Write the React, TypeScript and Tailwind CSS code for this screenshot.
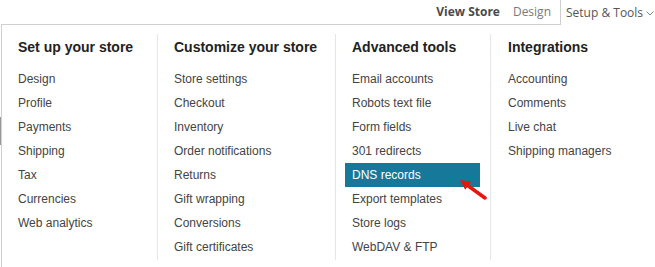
import React from "react";

const cols: { title: string; items: string[] }[] = [
  {
    title: "Set up your store",
    items: ["Design", "Profile", "Payments", "Shipping", "Tax", "Currencies", "Web analytics"],
  },
  {
    title: "Customize your store",
    items: [
      "Store settings",
      "Checkout",
      "Inventory",
      "Order notifications",
      "Returns",
      "Gift wrapping",
      "Conversions",
      "Gift certificates",
    ],
  },
  {
    title: "Advanced tools",
    items: [
      "Email accounts",
      "Robots text file",
      "Form fields",
      "301 redirects",
      "DNS records",
      "Export templates",
      "Store logs",
      "WebDAV & FTP",
    ],
  },
  {
    title: "Integrations",
    items: ["Accounting", "Comments", "Live chat", "Shipping managers"],
  },
];

const colClass = [
  "w-[155px] flex-none pl-[9px] pr-[10px]",
  "w-[178px] flex-none border-l border-[#e6e6e6] pl-[9px] pr-[10px]",
  "w-[155px] flex-none border-l border-[#e6e6e6] pl-[9px] pr-[10px]",
  "flex-1 border-l border-[#e6e6e6] pl-[10px] pr-[10px]",
];

function Arrow() {
  return (
    <svg
      className="absolute left-[110px] top-[14px]"
      width="32"
      height="24"
      viewBox="0 0 32 24"
    >
      <line x1="12" y1="8" x2="30" y2="21" stroke="#e8150d" strokeWidth="3.5" strokeLinecap="round" />
      <polygon points="5,3 10.2,12.85 16,4.75" fill="#e8150d" />
    </svg>
  );
}

export default function App() {
  return (
    <div className="flex w-[655px] h-[267px] overflow-hidden bg-white">
      <div className="w-px flex-none flex flex-col">
        <div className="h-[117px]" />
        <div className="h-[28px] bg-[#9a9a9a]" />
      </div>
      <div className="flex-1 flex flex-col">
        <div
          className="h-[25px] flex flex-none text-[12px] leading-[16px]"
          style={{ fontFamily: '"Open Sans", "Liberation Sans", sans-serif' }}
        >
          <div className="flex-1 border-b border-[#cfcfcf] flex items-center justify-end pr-[9px]">
            <span className="font-bold text-[#4a4a4a]">View Store</span>
            <span className="ml-[13px] text-[#7a7a7a]">Design</span>
          </div>
          <div className="w-[95px] flex-none border-l border-[#cfcfcf] flex items-center pl-[5px] text-[#555]">
            <span>Setup &amp; Tools</span>
            <svg className="ml-[3px] mt-[2px]" width="8" height="5" viewBox="0 0 8 5">
              <polyline points="0.5,0.5 4,4 7.5,0.5" fill="none" stroke="#888" strokeWidth="1" />
            </svg>
          </div>
        </div>
        <div
          className="flex-1 border-l border-[#cfcfcf] flex pt-[9px]"
          style={{ fontFamily: '"Liberation Sans", Arial, sans-serif' }}
        >
          {cols.map((c, ci) => (
            <div key={c.title} className={colClass[ci] + " h-[226px] pt-[3px]"}>
              <div className="h-[20px] leading-[20px] text-[14px] font-bold text-[#222] pl-[7px] mb-[10px] whitespace-nowrap">
                {c.title}
              </div>
              {c.items.map((it) =>
                it === "DNS records" ? (
                  <div
                    key={it}
                    className="relative h-[24px] flex items-center px-[7px] text-[12px] text-white bg-[#17799a] whitespace-nowrap"
                  >
                    {it}
                    <Arrow />
                  </div>
                ) : (
                  <div
                    key={it}
                    className="h-[24px] flex items-center px-[7px] text-[12px] text-[#444] whitespace-nowrap"
                  >
                    {it}
                  </div>
                )
              )}
            </div>
          ))}
        </div>
      </div>
    </div>
  );
}
